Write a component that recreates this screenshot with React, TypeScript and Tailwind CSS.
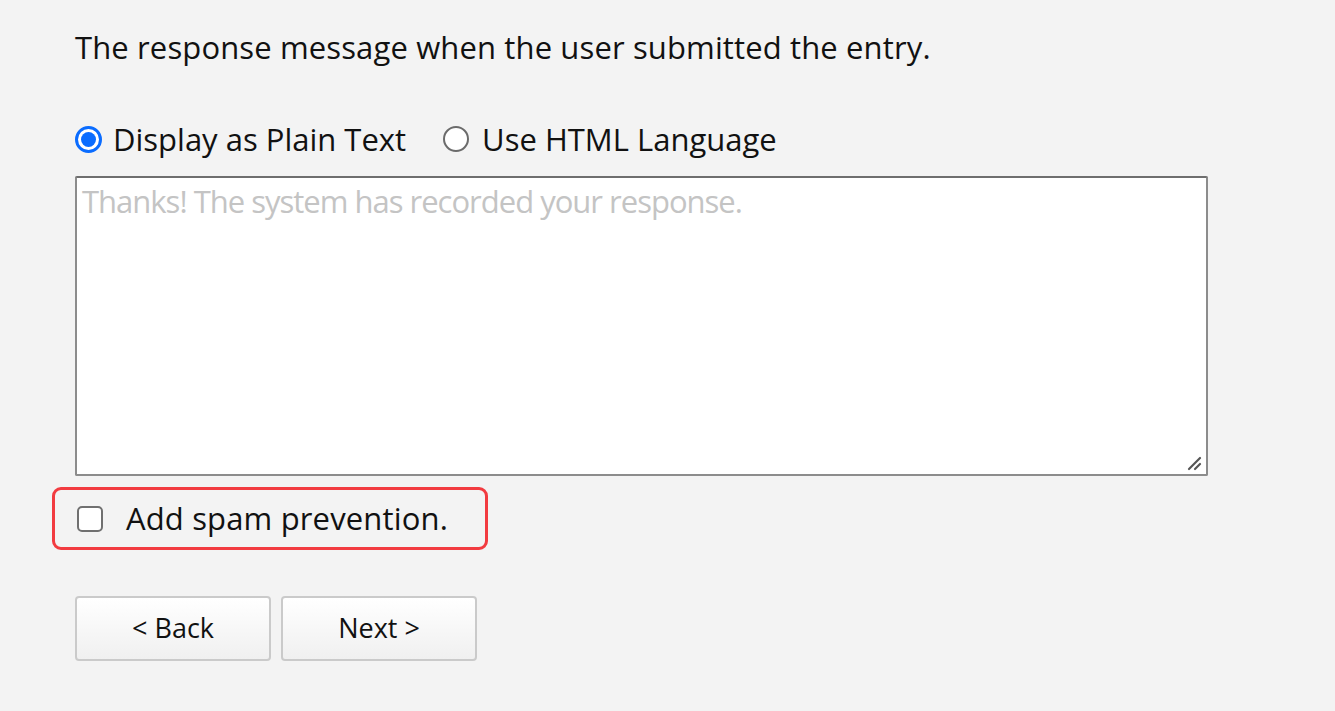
import React from "react";

const App = () => {
  return (
    <div
      className="w-[1335px] h-[711px] bg-[#f3f3f3] text-[#111] overflow-hidden"
      style={{ fontFamily: '"Open Sans", sans-serif' }}
    >
      <div className="pl-[75px] pt-[27px] w-[1208px]">
        <p className="text-[31px] leading-[40px] tracking-[0.13px]">The response message when the user submitted the entry.</p>

        <div className="flex items-center mt-[52px] h-[40px] text-[31px]">
          <span className="w-[27px] h-[27px] rounded-full border-[3px] border-[#0a6cff] bg-white flex items-center justify-center">
            <span className="w-[15px] h-[15px] rounded-full bg-[#0a6cff]" />
          </span>
          <span className="ml-[11px]">Display as Plain Text</span>
          <span className="ml-[37px] w-[26px] h-[26px] rounded-full border-[2px] border-[#6b6b6b] bg-white" />
          <span className="ml-[13px]">Use HTML Language</span>
        </div>

        <div className="relative mt-[17px] h-[300px] bg-white border-2 border-[#8c8c8c] border-t-[#6e6e6e] rounded-[2px]">
          <p className="pl-[5px] pt-[3px] text-[31px] leading-[40px] text-[#c4c4c4] tracking-[-1px]">
            Thanks! The system has recorded your response.
          </p>
          <svg className="absolute right-[3px] bottom-[3px]" width="16" height="16" viewBox="0 0 16 16">
            <path d="M2 14 L13 3" stroke="#555" strokeWidth="2.2" strokeLinecap="round" />
            <path d="M8 14 L13 9" stroke="#555" strokeWidth="2.2" strokeLinecap="round" />
          </svg>
        </div>

        <div className="-ml-[23px] mt-[11px] w-[436px] h-[63px] border-[3px] border-[#f23b40] rounded-[9px] flex items-center pl-[22px]">
          <span className="w-[26px] h-[26px] rounded-[5px] border-2 border-[#707070] bg-white" />
          <span className="ml-[23px] text-[31px] tracking-[0.15px]">Add spam prevention.</span>
        </div>

        <div className="flex gap-[10px] mt-[46px]">
          <button className="w-[196px] h-[65px] rounded-[4px] border-2 border-[#cacaca] bg-gradient-to-b from-white to-[#f0f0f0] text-[27px] text-[#111]">
            &lt; Back
          </button>
          <button className="w-[196px] h-[65px] rounded-[4px] border-2 border-[#cacaca] bg-gradient-to-b from-white to-[#f0f0f0] text-[27px] text-[#111]">
            Next &gt;
          </button>
        </div>
      </div>
    </div>
  );
};

export default App;
